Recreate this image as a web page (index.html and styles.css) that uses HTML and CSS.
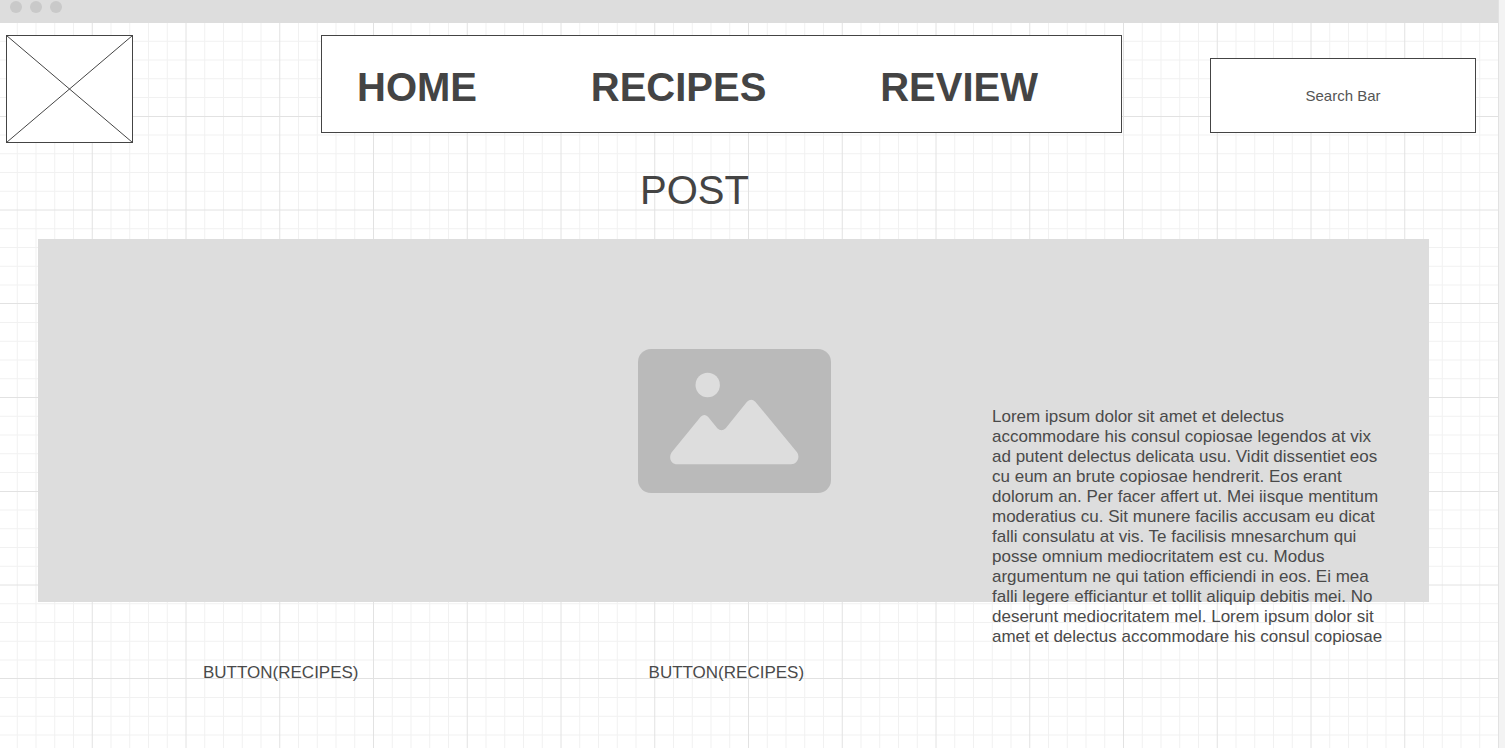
FILE: index.html
```html
<!DOCTYPE html>
<html lang="en">
<head>
<meta charset="utf-8">
<meta name="viewport" content="width=device-width, initial-scale=1">
<title>Post</title>
<link rel="stylesheet" href="styles.css">
</head>
<body>
<div class="canvas">
  <svg class="grid" aria-hidden="true">
    <defs>
      <!-- Four major cells per tile, five minor cells in each -->
      <pattern id="tile" x="-2" y="-259" width="375" height="375" patternUnits="userSpaceOnUse">
        <path class="grid-minor" d="M19.25 0V375M38 0V375M56.75 0V375M75.5 0V375M113 0V375M131.75 0V375M150.5 0V375M169.25 0V375M206.75 0V375M225.5 0V375M244.25 0V375M263 0V375M300.5 0V375M319.25 0V375M338 0V375M356.75 0V375M0 19H375M0 37.75H375M0 56.5H375M0 75.25H375M0 112.75H375M0 131.5H375M0 150.25H375M0 169H375M0 206.5H375M0 225.25H375M0 244H375M0 262.75H375M0 300.25H375M0 319H375M0 337.75H375M0 356.5H375"/>
        <path class="grid-major" d="M.5 0V375M94.25 0V375M188 0V375M281.75 0V375M0 .5H375M0 94H375M0 187.5H375M0 281.5H375"/>
      </pattern>
    </defs>
    <rect width="100%" height="100%" fill="url(#tile)"/>
  </svg>

  <div class="window-bar">
    <span class="dot"></span><span class="dot"></span><span class="dot"></span>
  </div>

  <header class="header">
    <svg class="logo" viewBox="0 0 127 108" role="img" aria-label="Logo">
      <rect x=".5" y=".5" width="126" height="107"/>
      <path d="M.5 .5L126.500 107.500M126.500 .5L.5 107.500"/>
    </svg>
    <nav class="nav">
      <a class="nav-link" href="#">HOME</a>
      <a class="nav-link" href="#">RECIPES</a>
      <a class="nav-link" href="#">REVIEW</a>
    </nav>
    <input class="search" type="text" placeholder="Search Bar" aria-label="Search Bar">
  </header>

  <main class="post">
    <h1 class="title">POST</h1>
    <section class="hero">
      <svg class="hero-icon" viewBox="0 0 193 144" role="img" aria-label="Image">
        <rect width="193" height="144" rx="13" fill="#bababa"/>
        <circle cx="69.700" cy="36" r="12.200" fill="#ddd"/>
        <path fill="#ddd" d="M33.700 103.300L62.700 67.700Q66.300 64.400 70 67.700L79.300 79.300Q83.500 83.300 87.700 79.300L109 52.700Q113.200 48.800 117.300 52.700L159 103.300C162.500 108.500 159 115.300 153 115.300H39.300C33 115.300 30.200 108.500 33.700 103.300Z"/>
      </svg>
      <p class="hero-text">Lorem ipsum dolor sit amet et delectus accommodare his consul copiosae legendos at vix ad putent delectus delicata usu. Vidit dissentiet eos cu eum an brute copiosae hendrerit. Eos erant dolorum an. Per facer affert ut. Mei iisque mentitum moderatius cu. Sit munere facilis accusam eu dicat falli consulatu at vis. Te facilisis mnesarchum qui posse omnium mediocritatem est cu. Modus argumentum ne qui tation efficiendi in eos. Ei mea falli legere efficiantur et tollit aliquip debitis mei. No deserunt mediocritatem mel. Lorem ipsum dolor sit amet et delectus accommodare his consul copiosae</p>
    </section>
    <div class="actions">
      <button class="action" type="button">BUTTON(RECIPES)</button>
      <button class="action" type="button">BUTTON(RECIPES)</button>
    </div>
  </main>
</div>
</body>
</html>
```
FILE: styles.css
```css
* {
  box-sizing: border-box;
}

body {
  margin: 0;
  padding-right: 6px;
  background: #f3f3f3;
  color: #444;
  font-family: "Liberation Sans", Arial, sans-serif;
  font-size: 17px;
  line-height: 20px;
}

.canvas {
  position: relative;
  z-index: 0;
  min-height: 100vh;
  border-right: 1px solid #e2e2e2;
  background: #fff;
}

.grid {
  position: absolute;
  inset: 0;
  z-index: -1;
  width: 100%;
  height: 100%;
}

.grid-minor,
.grid-major {
  fill: none;
  stroke: #f1f1f1;
}

.grid-major {
  stroke: #e2e2e2;
}

.window-bar {
  display: flex;
  gap: 8px;
  height: 23px;
  padding: 1px 10px;
  background: #ddd;
}

.dot {
  width: 12px;
  height: 12px;
  border-radius: 50%;
  background: #c9c9c9;
}

.header {
  display: grid;
  grid-template-columns: 227px 801fr 266fr;
  align-items: start;
  gap: 88px;
  padding: 12px 22px 0 6px;
}

.logo {
  width: 127px;
  height: 108px;
  fill: #fff;
  stroke: #444;
}

.nav {
  display: flex;
  align-items: center;
  justify-content: space-between;
  height: 98px;
  padding: 6px 83px 0 35px;
  border: 1px solid #444;
  background: #fff;
}

.nav-link {
  color: inherit;
  font-size: 40px;
  font-weight: bold;
  line-height: 46px;
  text-decoration: none;
}

.search {
  width: 100%;
  min-width: 0;
  height: 75px;
  margin: 23px 0 0;
  padding: 0 8px;
  border: 1px solid #444;
  border-radius: 0;
  background: #fff;
  color: #555;
  font: inherit;
  font-size: 15px;
  text-align: center;
}

.search::placeholder {
  color: #555;
  opacity: 1;
}

.post {
  padding: 24px 69px 60px 38px;
}

.title {
  margin: 0 78px 26px 0;
  font-size: 40px;
  font-weight: normal;
  line-height: 46px;
  text-align: center;
}

.hero {
  position: relative;
  display: flex;
  align-items: center;
  justify-content: center;
  height: 363px;
  padding-left: 2px;
  background: #ddd;
}

.hero-icon {
  width: 193px;
  height: 144px;
}

/* The copy hangs over the lower edge of the image */
.hero-text {
  position: absolute;
  top: 168px;
  right: 37px;
  width: 400px;
  margin: 0;
  color: #4a4a4a;
}

.actions {
  display: flex;
  gap: 290px;
  padding: 61px 0 0 165px;
}

.action {
  padding: 0;
  border: 0;
  background: none;
  color: #4a4a4a;
  font: inherit;
}
```
